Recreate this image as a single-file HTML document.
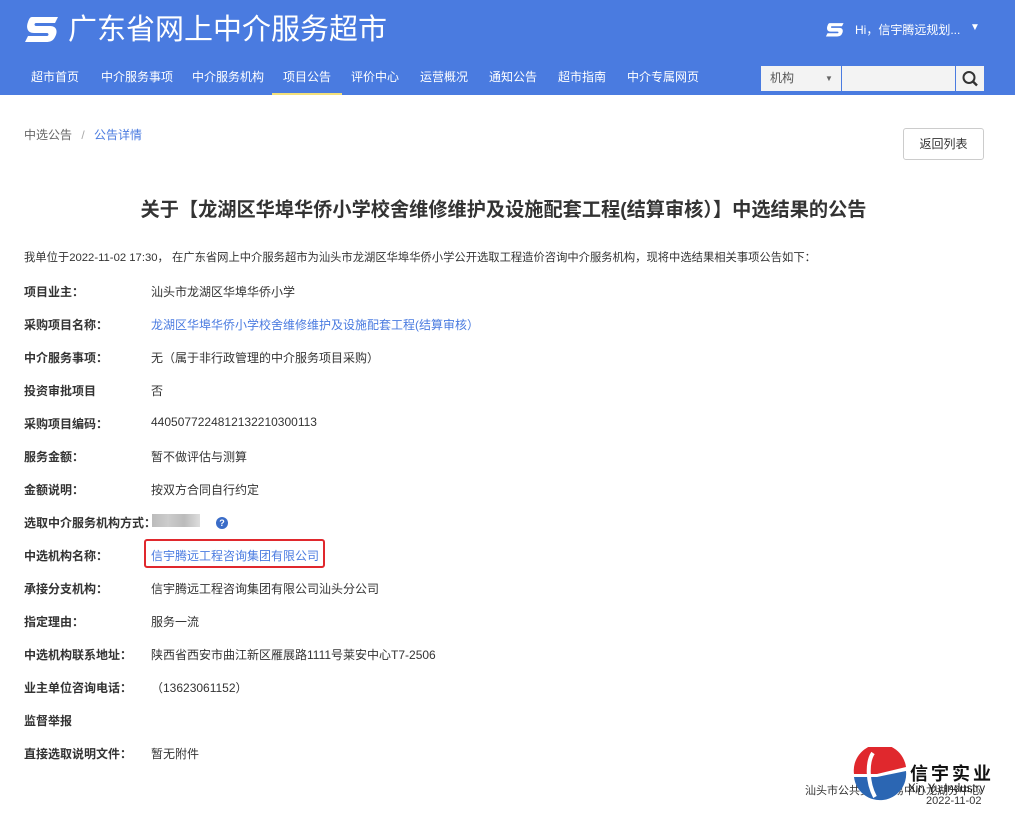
<!DOCTYPE html>
<html><head><meta charset="utf-8"><style>
*{margin:0;padding:0;box-sizing:border-box}
body{width:1015px;height:816px;overflow:hidden;background:#fff;font-family:"Liberation Sans","Noto Sans CJK SC",sans-serif;color:#333;position:relative}
.hd{position:absolute;left:0;top:0;width:1015px;height:95px;background:#4a7be0}
.logo{position:absolute;left:24px;top:12px;color:#fff;font-size:29px;line-height:36px;white-space:nowrap}
.nav{position:absolute;top:60px;left:0;height:35px;width:1015px}
.nav span{position:absolute;top:0;line-height:35px;font-size:12px;color:#fff}
.act{border-bottom:2px solid #f3e07a}
.user{position:absolute;left:855px;top:21px;color:#fff;font-size:12px}
.sel{position:absolute;left:761px;top:66px;width:80px;height:25px;background:#f3f3f3;font-size:12px;color:#555;line-height:25px;padding-left:9px}
.inp{position:absolute;left:842px;top:66px;width:113px;height:25px;background:#f3f3f3}
.sb{position:absolute;left:956px;top:66px;width:28px;height:25px;background:#f3f3f3}
.a{position:absolute;font-size:12px;white-space:nowrap}
.l{left:24px;font-weight:bold;color:#333}
.v{left:151px;color:#333}
.blue{color:#4a7be0}
</style></head><body>
<div class="hd"></div>
<svg style="position:absolute;left:24px;top:15px" width="36" height="28" viewBox="0 0 36 28"><path d="M8 2h26l-3 6H12c-2 0-2 3 0 3h14c7 0 8 6 5 11-2 4-5 5-9 5H1l3-6h19c2 0 2-3 0-3H10C3 18 2 12 4 7 5 4 6 2 8 2z" fill="#fff"/></svg>
<div class="logo" style="left:68px">广东省网上中介服务超市</div>
<svg style="position:absolute;left:825px;top:22px" width="20" height="15" viewBox="0 0 36 28"><path d="M8 2h26l-3 6H12c-2 0-2 3 0 3h14c7 0 8 6 5 11-2 4-5 5-9 5H1l3-6h19c2 0 2-3 0-3H10C3 18 2 12 4 7 5 4 6 2 8 2z" fill="#fff"/></svg>
<div class="user">Hi，信宇腾远规划...</div>
<div class="user" style="left:970px;font-size:10px;top:22px">▼</div>
<div class="nav">
<span style="left:31px">超市首页</span><span style="left:101px">中介服务事项</span><span style="left:192px">中介服务机构</span><span class="act" style="left:272px;padding:0 11px;height:35px">项目公告</span><span style="left:351px">评价中心</span><span style="left:420px">运营概况</span><span style="left:489px">通知公告</span><span style="left:558px">超市指南</span><span style="left:627px">中介专属网页</span>
</div>
<div class="sel">机构<span style="position:absolute;left:64px;font-size:8px;color:#666">▼</span></div>
<div class="inp"></div>
<div class="sb"><svg width="28" height="25"><circle cx="13" cy="11.5" r="5.5" fill="none" stroke="#333" stroke-width="2"/><path d="M17 15.5l4 4" stroke="#333" stroke-width="2.4"/></svg></div>
<div class="a" style="left:24px;top:126px;color:#666">中选公告 <span style="color:#aaa;margin:0 6px">/</span> <span class="blue">公告详情</span></div>
<div class="a" style="left:903px;top:128px;width:81px;height:32px;border:1px solid #ccc;border-radius:3px;text-align:center;line-height:30px;color:#333">返回列表</div>
<div class="a" style="left:0;width:1007px;text-align:center;top:194px;font-size:19.2px;font-weight:bold;color:#333">关于【龙湖区华埠华侨小学校舍维修维护及设施配套工程(结算审核）】中选结果的公告</div>
<div class="a" style="left:24px;top:249px;font-size:11.3px">我单位于2022-11-02 17:30， 在广东省网上中介服务超市为汕头市龙湖区华埠华侨小学公开选取工程造价咨询中介服务机构，现将中选结果相关事项公告如下：</div>
<div class="a l" style="top:283px">项目业主：</div><div class="a v" style="top:283px">汕头市龙湖区华埠华侨小学</div>
<div class="a l" style="top:316px">采购项目名称：</div><div class="a v blue" style="top:316px">龙湖区华埠华侨小学校舍维修维护及设施配套工程(结算审核）</div>
<div class="a l" style="top:349px">中介服务事项：</div><div class="a v" style="top:349px">无（属于非行政管理的中介服务项目采购）</div>
<div class="a l" style="top:382px">投资审批项目</div><div class="a v" style="top:382px">否</div>
<div class="a l" style="top:415px">采购项目编码：</div><div class="a v" style="top:415px">4405077224812132210300113</div>
<div class="a l" style="top:448px">服务金额：</div><div class="a v" style="top:448px">暂不做评估与测算</div>
<div class="a l" style="top:481px">金额说明：</div><div class="a v" style="top:481px">按双方合同自行约定</div>
<div class="a l" style="top:514px">选取中介服务机构方式：</div>
<div class="a" style="left:152px;top:514px;width:48px;height:13px;background:linear-gradient(90deg,#bbb,#ccc,#bbb,#ddd)"></div>
<div class="a" style="left:216px;top:517px;width:12px;height:12px;border-radius:50%;background:#3a6cc8;color:#fff;font-size:9px;text-align:center;line-height:12px;font-weight:bold">?</div>
<div class="a l" style="top:547px">中选机构名称：</div><div class="a v blue" style="top:547px">信宇腾远工程咨询集团有限公司</div>
<div class="a" style="left:144px;top:539px;width:181px;height:29px;border:2px solid #e0282d;border-radius:3px"></div>
<div class="a l" style="top:580px">承接分支机构：</div><div class="a v" style="top:580px">信宇腾远工程咨询集团有限公司汕头分公司</div>
<div class="a l" style="top:613px">指定理由：</div><div class="a v" style="top:613px">服务一流</div>
<div class="a l" style="top:646px">中选机构联系地址：</div><div class="a v" style="top:646px">陕西省西安市曲江新区雁展路1111号莱安中心T7-2506</div>
<div class="a l" style="top:679px">业主单位咨询电话：</div><div class="a v" style="top:679px">（13623061152）</div>
<div class="a l" style="top:712px">监督举报</div>
<div class="a l" style="top:745px">直接选取说明文件：</div><div class="a v" style="top:745px">暂无附件</div>
<div class="a" style="left:805px;top:782px;font-size:11px">汕头市公共资源交易中心龙湖分中心</div>
<div class="a" style="left:926px;top:795px;font-size:11px">2022-11-02</div>
<svg style="position:absolute;left:853px;top:747px" width="54" height="54" viewBox="0 0 54 54"><circle cx="27" cy="27" r="26" fill="#fff"/><path d="M1 27A26 26 0 0 1 53 20L24 27Z" fill="#e0282d"/><path d="M1 30L24 30 53 24A26 26 0 0 1 1 30Z" fill="#2b66b3"/><path d="M20 6C14 15 14 35 22 50" stroke="#fff" stroke-width="4" fill="none"/></svg>
<div class="a" style="left:910px;top:760px;font-size:18px;font-weight:bold;color:#111;letter-spacing:3px">信宇实业</div>
<div class="a" style="left:908px;top:783px;font-size:11.5px;color:#222">Xin Yu Industry</div>
</body></html>
